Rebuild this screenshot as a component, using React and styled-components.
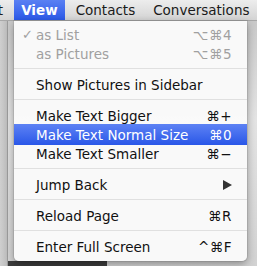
import React from "react";
import styled, { createGlobalStyle } from "styled-components";

const GlobalStyle = createGlobalStyle`
  html, body {
    margin: 0;
    padding: 0;
    background: #d6d6d6;
  }
`;

const Page = styled.div`
  position: relative;
  width: 257px;
  height: 266px;
  overflow: hidden;
  font-family: "DejaVu Sans", "Liberation Sans", sans-serif;
  background: #dcdcdc;
`;

const MenuBar = styled.div`
  display: flex;
  align-items: stretch;
  height: 21px;
  background: linear-gradient(#ededed, #d4d4d4);
  border-bottom: 1px solid #a8a8a8;
  box-sizing: border-box;
  margin-left: -32px;
`;

const BarItem = styled.div`
  display: flex;
  align-items: center;
  padding: 0 ${(p) => (p.active ? "7px" : "9px")};
  margin: 0 ${(p) => (p.active ? "2px" : "0")};
  font-size: 13.5px;
  color: ${(p) => (p.active ? "#fff" : "#1a1a1a")};
  font-weight: ${(p) => (p.active ? "bold" : "normal")};
  background: ${(p) =>
    p.active ? "linear-gradient(#5a80f3, #2b59e8)" : "transparent"};
  white-space: nowrap;
`;

const Window = styled.div`
  display: flex;
  height: 245px;
`;

const Sidebar = styled.div`
  width: 7px;
  background: linear-gradient(90deg, #cfcfcf, #bdbdbd);
  border-right: 1px solid #9c9c9c;
`;

const Panel = styled.div`
  flex: 1;
  display: flex;
  flex-direction: column;
  justify-content: flex-end;
  background: linear-gradient(#c9c9c9, #e4e4e4 40%, #d2d2d2);
`;

const Footer = styled.div`
  height: 5px;
  margin-right: 150px;
  background: #3c3c3c;
`;

const Menu = styled.div`
  position: absolute;
  left: 14px;
  top: 21px;
  width: 233px;
  padding: 4px 0 5px;
  background: rgba(250, 250, 250, 0.97);
  border-radius: 0 0 5px 5px;
  box-shadow: 0 3px 8px rgba(0, 0, 0, 0.35), 0 0 0 1px rgba(0, 0, 0, 0.08);
`;

const Item = styled.div`
  display: flex;
  align-items: center;
  height: ${(p) => (p.active ? "21px" : "19px")};
  margin: ${(p) => (p.active ? "-1px 0" : "0")};
  padding: 0 15px 0 8px;
  font-size: 13.5px;
  color: ${(p) => (p.active ? "#fff" : p.disabled ? "#a0a0a0" : "#111")};
  background: ${(p) =>
    p.active ? "linear-gradient(#5d82f4, #2a57e8)" : "transparent"};
`;

const Check = styled.span`
  width: 14px;
  font-size: 13px;
`;

const Label = styled.span`
  flex: 1;
  white-space: nowrap;
`;

const Shortcut = styled.span`
  white-space: nowrap;
  letter-spacing: 0.5px;
`;

const Arrow = styled.span`
  width: 0;
  height: 0;
  border-top: 5px solid transparent;
  border-bottom: 5px solid transparent;
  border-left: 9px solid #333;
`;

const Separator = styled.div`
  height: 1px;
  margin: 5px 0 6px;
  background: #e0e0e0;
`;

const items = [
  { label: "as List", key: "⌥⌘4", disabled: true, checked: true },
  { label: "as Pictures", key: "⌥⌘5", disabled: true },
  "sep",
  { label: "Show Pictures in Sidebar" },
  "sep",
  { label: "Make Text Bigger", key: "⌘+" },
  { label: "Make Text Normal Size", key: "⌘0", active: true },
  { label: "Make Text Smaller", key: "⌘−" },
  "sep",
  { label: "Jump Back", arrow: true },
  "sep",
  { label: "Reload Page", key: "⌘R" },
  "sep",
  { label: "Enter Full Screen", key: "^⌘F" },
];

export default function App() {
  return (
    <Page>
      <GlobalStyle />
      <MenuBar>
        <BarItem>Edit</BarItem>
        <BarItem active>View</BarItem>
        <BarItem>Contacts</BarItem>
        <BarItem>Conversations</BarItem>
      </MenuBar>
      <Window>
        <Sidebar />
        <Panel>
          <Footer />
        </Panel>
      </Window>
      <Menu>
        {items.map((it, i) =>
          it === "sep" ? (
            <Separator key={i} />
          ) : (
            <Item key={i} disabled={it.disabled} active={it.active}>
              <Check>{it.checked ? "✓" : ""}</Check>
              <Label>{it.label}</Label>
              {it.key && <Shortcut>{it.key}</Shortcut>}
              {it.arrow && <Arrow />}
            </Item>
          )
        )}
      </Menu>
    </Page>
  );
}
